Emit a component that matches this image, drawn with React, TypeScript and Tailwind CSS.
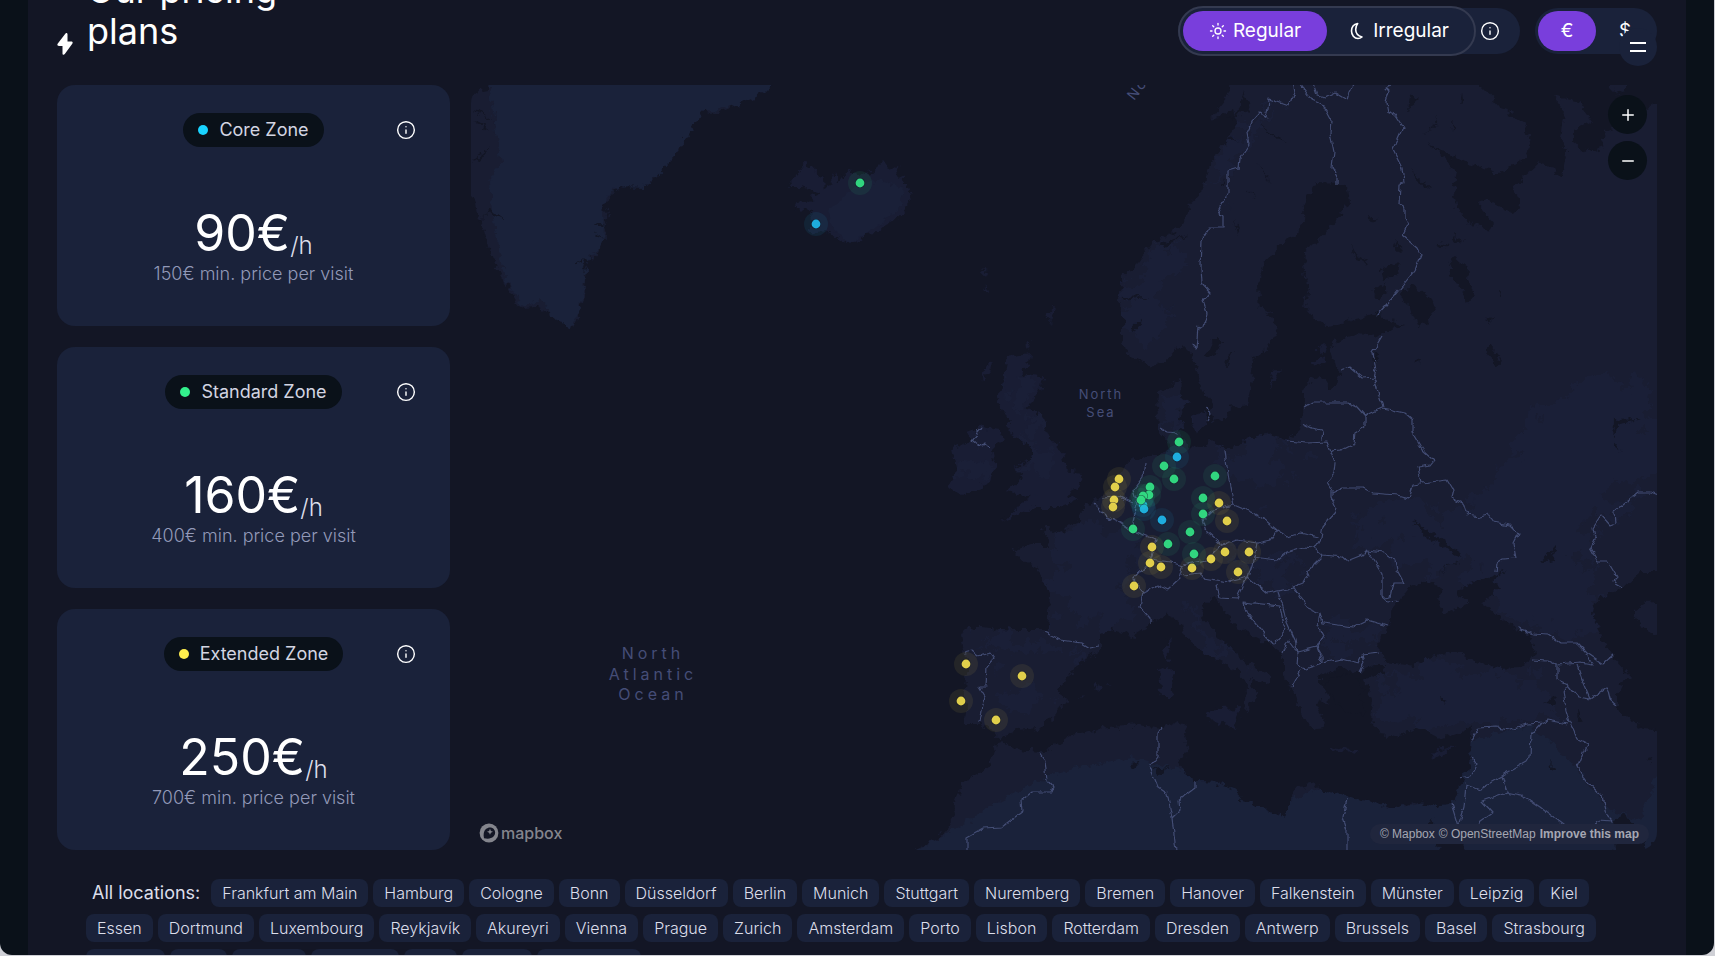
import {useState} from "react"
import clsx from "clsx"
import {Info, Minus, Plus, Sun} from "lucide-react"

interface Zone {
    name: string
    dot: string
    price: number
    minimum: number
}

const zones: Zone[] = [
    {name: "Core Zone", dot: "bg-[#19d3ff]", price: 90, minimum: 150},
    {name: "Standard Zone", dot: "bg-[#33f08c]", price: 160, minimum: 400},
    {name: "Extended Zone", dot: "bg-[#ffee4d]", price: 250, minimum: 700},
]

const locations = [
    "Frankfurt am Main", "Hamburg", "Cologne", "Bonn", "Düsseldorf", "Berlin", "Munich", "Stuttgart",
    "Nuremberg", "Bremen", "Hanover", "Falkenstein", "Münster", "Leipzig", "Kiel",
    "Essen", "Dortmund", "Luxembourg", "Reykjavík", "Akureyri", "Vienna", "Prague", "Zurich",
    "Amsterdam", "Porto", "Lisbon", "Rotterdam", "Dresden", "Antwerp", "Brussels", "Basel", "Strasbourg",
    "Geneva", "Graz", "Madrid", "Salzburg", "Linz", "Seville", "The Hague",
]

const markers: {color: string, points: number[][]}[] = [
    {color: "#f2de4e", points: [
        [1119, 479], [1115, 487], [1114, 500], [1113, 507], [1219, 503], [1227, 521], [1152, 547], [1150, 563],
        [1161, 567], [1192, 568], [1211, 559], [1225, 552], [1249, 552], [1238, 572], [1134, 586],
        [966, 664], [1022, 676], [961, 701], [996, 720],
    ]},
    {color: "#1fb9ee", points: [[816, 224], [1177, 457], [1143, 505], [1144, 509], [1162, 520]]},
    {color: "#34e587", points: [
        [860, 183], [1179, 442], [1164, 466], [1174, 479], [1215, 476], [1203, 498], [1203, 514], [1190, 532],
        [1168, 544], [1194, 554], [1133, 529], [1150, 487], [1149, 495], [1143, 496], [1141, 500],
    ]},
]

const continent = "M1233 80 1227 97 1210 120 1233 110 1237 123 1228 138 1217 153 1208 170 1203 190 1187 205 1192 210 1177 230 1153 243 1137 263 1122 277 1119 300 1123 320 1123 340 1128 355 1148 367 1167 360 1183 343 1190 350 1197 370 1203 393 1212 403 1211 422 1223 420 1230 408 1247 405 1252 380 1255 357 1267 347 1278 330 1273 317 1260 307 1258 287 1263 267 1277 247 1297 235 1303 220 1304 203 1317 182 1337 183 1348 188 1350 203 1337 220 1317 242 1305 250 1304 267 1308 287 1305 307 1313 317 1328 327 1353 320 1377 313 1388 320 1405 325 1383 332 1380 337 1360 333 1330 343 1333 355 1337 370 1340 372 1338 387 1330 388 1320 375 1310 380 1303 393 1302 420 1300 430 1287 440 1275 437 1273 433 1253 437 1230 448 1223 448 1213 440 1200 448 1190 447 1183 437 1177 430 1178 423 1180 412 1187 403 1182 397 1183 377 1167 390 1158 393 1157 410 1160 430 1165 440 1168 450 1153 455 1143 458 1127 463 1120 477 1110 490 1100 498 1083 507 1082 520 1067 527 1058 533 1048 528 1043 528 1048 545 1033 545 1012 550 1020 558 1037 567 1040 577 1050 593 1048 630 1013 630 980 627 972 627 960 635 963 650 968 667 965 687 962 700 967 707 964 724 980 724 993 732 1001 739 1015 730 1040 728 1055 715 1067 700 1060 690 1073 668 1100 650 1100 633 1112 629 1133 636 1150 625 1165 615 1180 622 1183 635 1207 655 1237 670 1247 687 1245 712 1258 695 1250 680 1272 683 1270 677 1237 655 1220 637 1202 617 1205 603 1217 597 1222 607 1233 623 1253 637 1273 647 1283 655 1283 677 1293 690 1300 707 1308 723 1317 733 1325 723 1317 707 1320 700 1330 703 1320 683 1320 675 1343 668 1360 673 1373 666 1385 666 1384 672 1363 680 1373 700 1370 717 1380 735 1397 737 1417 728 1437 738 1453 735 1472 727 1470 743 1471 760 1460 787 1452 803 1437 806 1417 802 1393 808 1373 802 1350 798 1327 792 1313 783 1297 788 1290 797 1290 810 1282 817 1263 808 1243 802 1237 790 1217 783 1197 782 1178 767 1188 747 1183 737 1189 725 1177 722 1163 728 1140 725 1113 727 1077 733 1043 752 1017 750 1003 742 997 743 988 767 963 782 953 803 955 817 940 837 920 847 905 862 1670 862 1670 78Z"

const islands = [
    // Iceland
    "M788 187 796 175 805 163 812 167 824 180 825 193 835 173 839 183 849 170 860 175 869 173 878 165 883 160 889 168 897 165 899 177 908 187 912 199 905 207 901 217 885 225 876 233 865 234 862 240 851 243 839 240 830 232 817 233 808 232 813 225 812 210 796 208 794 204 814 202 810 197 819 192 803 187Z",
    // Great Britain and Ireland
    "M1007 357 1030 353 1028 365 1020 375 1043 377 1040 390 1027 408 1042 415 1047 433 1063 453 1067 470 1083 473 1080 487 1067 493 1078 500 1060 507 1037 507 1020 513 1002 522 1020 503 1033 497 1007 492 1023 477 1013 467 1030 460 1033 447 1020 440 1008 432 1010 420 1002 412 998 397 1003 377Z",
    "M982 427 1000 430 1002 440 992 450 995 467 990 483 963 495 947 487 957 473 952 450 970 440 968 432Z",
    "M985 368 993 359 990 372 982 382ZM1027 340 1032 345 1028 350ZM1048 312 1055 306 1050 325ZM981 270 990 271 987 277ZM985 285 990 292 986 291Z",
    // Denmark's islands, Gotland, Saaremaa
    "M1190 417 1207 411 1205 426 1196 434ZM1174 421 1184 420 1183 430 1176 429ZM1272 373 1282 369 1270 388ZM1312 363 1324 356 1328 361 1313 367ZM1316 348 1325 346 1324 353Z",
    // Mediterranean
    "M1158 670 1170 665 1174 680 1172 697 1162 697ZM1162 650 1171 638 1168 661ZM1205 713 1215 709 1240 708 1235 729 1212 720ZM1330 747 1360 751 1356 754 1332 750ZM1430 754 1453 745 1442 757 1434 759ZM1092 687 1098 684 1102 688 1098 693ZM1078 698 1083 697 1080 700ZM1107 683 1112 684 1109 685Z",
]

const greenland = "M488 78 780 78 765 92 750 100 738 105 722 112 712 114 702 112 693 98 700 117 690 127 686 138 680 150 674 158 665 166 655 178 646 187 640 182 630 186 636 171 626 187 617 186 612 197 603 204 608 215 604 225 606 236 600 246 596 254 588 262 586 278 584 296 580 310 577 322 571 328 555 318 540 307 522 308 515 300 507 285 498 268 490 250 484 230 478 215 475 200 465 190 465 95 488 90Z"

const seas = [
    // White Sea
    "M1475 80 1488 93 1500 107 1523 122 1532 142 1523 160 1500 173 1470 165 1447 153 1428 142 1457 173 1453 193 1460 215 1487 233 1494 223 1477 203 1487 200 1513 213 1520 205 1513 187 1540 162 1562 175 1567 150 1560 138 1564 110 1553 96 1577 101 1592 122 1573 130 1573 140 1587 152 1602 148 1605 130 1622 126 1630 112 1647 108 1668 97 1668 78 1627 78 1627 88 1616 95 1608 78Z",
    // Black Sea and the Sea of Azov
    "M1377 645 1387 630 1392 610 1410 587 1427 580 1443 590 1437 600 1443 613 1467 605 1467 600 1455 590 1480 580 1507 570 1493 580 1498 588 1490 598 1480 602 1487 607 1513 627 1530 637 1536 655 1520 667 1497 668 1470 660 1460 652 1430 657 1413 666 1387 662Z",
    // Caspian Sea
    "M1668 572 1640 572 1623 587 1597 600 1592 613 1602 637 1613 657 1632 677 1622 682 1617 693 1617 710 1630 720 1643 729 1668 731 1668 640 1645 630 1633 613 1645 602 1668 600Z",
    // Red Sea and the Gulf
    "M1430 818 1445 840 1452 845 1458 830 1468 860 1443 860ZM1612 822 1622 816 1632 818 1637 833 1645 847 1653 845 1668 835 1668 860 1616 860Z",
    // Lakes
    "M1412 283 1432 300 1436 310 1428 322 1417 326 1408 303 1402 295ZM1455 257 1468 267 1467 280 1476 293 1468 303 1460 287 1448 267ZM1490 345 1503 362 1498 366 1485 352ZM1213 340 1223 340 1217 353 1205 358ZM1233 352 1230 360 1225 370 1226 358ZM1373 349 1379 360 1374 365ZM1485 320 1493 317 1490 323ZM1415 362 1421 359 1420 364ZM1500 290 1503 293 1501 297Z",
    "M1438 116 1432 130 1425 132 1436 127ZM1451 120 1454 128 1452 131ZM1463 93 1464 100 1461 103ZM1410 96 1420 99 1411 107 1408 112ZM1410 168 1420 179 1432 189 1420 184ZM1452 232 1462 242 1455 243ZM1440 242 1448 246 1442 248ZM1352 246 1358 258 1368 264 1356 260ZM1380 270 1400 262 1396 275 1382 280ZM1372 290 1384 284 1388 294 1377 300ZM1367 216 1377 218 1370 223ZM1393 240 1402 250 1398 252Z",
    "M1412 520 1430 532 1450 545 1461 552 1460 558 1445 546 1425 536ZM1461 563 1446 566 1441 577 1446 564ZM1614 420 1640 419 1620 424 1613 440 1622 452 1613 444ZM1540 563 1557 545 1552 560ZM1543 581 1558 590 1548 584ZM1440 698 1445 700 1442 704ZM1543 702 1556 697 1552 704ZM1577 708 1582 720 1578 723ZM1550 762 1556 768 1553 772ZM1646 760 1652 758 1653 764ZM1132 763 1138 762 1134 768ZM1152 770 1170 768 1160 774Z",
    // Aegean and Norwegian inlets
    "M1322 682 1350 672 1362 684 1360 700 1366 715 1345 712 1330 695ZM1122 298 1150 297 1124 301ZM1130 328 1144 316 1134 333ZM1160 243 1190 234 1165 246ZM1225 120 1250 110 1245 90 1240 110ZM1228 138 1240 140 1230 141ZM1220 183 1228 178 1222 186ZM1258 123 1288 144 1276 138ZM1256 162 1272 184 1264 175ZM1247 190 1257 199 1252 196ZM1234 220 1240 234 1236 230Z",
    // Greenland's fjords
    "M471 110 495 122 480 112ZM471 123 490 130 478 122ZM472 163 490 147 480 160ZM478 223 490 210 504 220 488 213ZM578 260 588 262 585 270ZM596 222 607 224 598 225ZM594 232 604 238 598 236ZM580 288 588 290 582 289Z",
]

// Grass and scrub, a shade lighter than the bare ground
const meadow = "M1120 290 1155 250 1185 240 1170 290 1150 345 1130 340ZM1215 160 1250 120 1275 100 1262 135 1230 165 1210 200ZM1002 370 1037 380 1024 408 1005 400ZM1025 420 1042 430 1060 470 1045 490 1030 470ZM1165 392 1180 385 1180 425 1165 430ZM955 460 990 455 985 480 960 490ZM1060 540 1100 520 1140 540 1130 600 1110 625 1055 620ZM1345 530 1400 500 1460 510 1530 430 1600 370 1657 405 1657 480 1600 510 1580 560 1600 590 1590 640 1540 630 1500 600 1450 570 1400 560ZM1240 560 1300 560 1290 585 1260 590ZM1330 630 1380 625 1370 650 1330 650ZM1385 670 1460 665 1530 680 1560 700 1540 720 1470 720 1430 735 1390 715ZM970 635 1040 635 1080 650 1060 660 1000 650ZM1000 680 1055 690 1030 715 990 705ZM1180 610 1220 640 1250 670 1230 660 1200 645ZM1210 450 1270 440 1300 460 1290 490 1240 480ZM1560 420 1600 400 1620 430 1590 450Z"
const iceCap = "M488 78 780 78 765 92 738 105 702 112 686 138 674 158 646 187 617 186 603 204 604 240 588 262 580 310 571 328 555 318 540 300 522 305 507 283 500 255 492 215 490 180 501 165 494 120Z"
const sands = "M895 862 963 825 1000 800 1050 775 1080 767 1130 758 1180 770 1240 790 1290 800 1340 780 1390 808 1455 800 1472 740 1530 725 1570 760 1610 810 1640 820 1670 740 1670 862Z"
const iceShades = "M830 210 850 190 880 180 905 190 898 210 870 232 850 243 832 228Z"

const borders = [
    "M1292 80 1294 92 1289 106 1269 99 1268 110 1266 117 1259 113 1253 120 1247 133 1249 145 1239 160 1238 168 1228 171 1228 193 1218 213 1223 216 1223 227 1210 227 1202 240 1201 267 1202 284 1210 293 1203 301 1207 313 1205 323 1198 328 1196 348 1192 344",
    "M1297 80 1312 100 1323 105 1331 120 1330 133 1334 152 1332 167 1337 177 1337 185",
    "M1312 80 1317 95 1325 97 1335 92 1347 99 1349 92 1356 80",
    "M1396 84 1386 88 1389 91 1386 102 1388 112 1395 115 1403 127 1393 150 1402 168 1404 183 1400 184 1399 205 1404 208 1404 218 1409 223 1403 235 1417 247 1421 255 1415 270 1395 295 1377 315",
    "M1382 337 1373 352 1376 370 1374 378 1378 393 1383 407M1340 370 1350 367 1363 378 1375 377",
    "M1303 408 1313 402 1347 402 1357 407 1365 416 1382 408 1392 410 1405 413 1413 420 1413 433 1423 450 1434 460 1430 465 1418 467 1422 483 1430 482 1447 480 1453 490 1451 498 1463 503 1467 515 1480 517 1488 515 1493 522 1510 525 1518 533 1513 543 1516 558 1503 559 1497 563 1496 572",
    "M1365 415 1365 427 1355 433 1354 443 1340 450 1330 451M1302 423 1312 428 1323 430 1322 440M1287 441 1307 443 1327 442 1335 462 1334 473 1327 482 1332 490 1332 498 1336 507 1335 513 1323 527 1321 538 1315 548 1323 555 1342 557 1347 561 1362 555 1367 550 1383 552 1395 560 1397 570 1404 583 1393 583 1390 597 1384 598",
    "M1332 493 1342 488 1363 488 1373 493 1397 495 1409 498 1413 485 1422 484M1368 551 1382 573 1382 597 1388 602 1398 601",
    "M1323 555 1313 565 1303 583 1293 587 1300 598 1308 608 1320 613 1323 623 1353 627 1367 620 1387 626M1320 613 1318 625 1323 635 1317 647 1323 657 1323 663 1342 659 1358 663 1362 655 1380 653M1362 655 1364 663 1360 671",
    "M1297 652 1317 647 1323 663 1305 669 1296 665ZM1301 670 1292 687M1283 653 1288 640 1297 652M1283 607 1286 620 1295 640 1297 652",
    "M1225 450 1227 467 1230 487 1234 505 1253 513 1265 520 1277 530 1288 537 1300 533 1318 537M1234 505 1213 510 1203 520 1207 532 1222 545 1237 540 1257 543 1270 540 1277 530M1257 543 1253 562 1248 577 1228 582 1203 578 1200 573 1183 575M1222 545 1207 560 1183 565M1253 557 1277 560 1287 552 1303 547 1315 548",
    "M1145 462 1143 477 1133 490 1137 503 1133 523 1137 532 1157 540 1150 560 1133 580 1143 592 1157 585 1167 590 1180 578 1183 567 1170 563 1150 560M1093 503 1107 517 1120 523 1130 530 1137 532M1102 498 1120 497 1133 503M1143 592 1140 607 1150 618 1150 623",
    "M1217 585 1220 597 1237 598 1243 585 1248 577 1267 593 1293 588M1243 603 1247 613 1273 645 1285 630 1280 607ZM1278 592 1283 607M1160 428 1167 432 1177 433M1207 407 1210 415 1207 421",
    "M982 428 972 440 980 447 985 442 990 447M1044 632 1060 640 1082 643 1090 648 1100 646M964 653 972 651 978 656 990 653 994 659 987 667 986 687 979 687 985 697 982 710 980 722",
    "M1040 753 1045 760 1047 780 1053 787 1051 792 1032 792 1022 800 1023 811 1002 827 983 828 967 837 967 858M1162 727 1158 733 1158 757 1150 767 1158 787 1167 793 1172 818 1177 858M1195 780 1195 788 1179 800 1180 810 1172 818M1347 799 1343 818 1347 830 1347 858",
    "M1517 629 1533 634 1548 635 1560 643 1577 643 1587 653 1603 664 1613 655M1533 659 1547 660 1557 665 1580 663 1592 665 1586 654M1557 665 1557 680 1568 685 1578 697 1590 699 1607 687 1610 700 1616 705M1577 665 1583 683 1590 699",
    "M1568 685 1563 692 1566 710 1570 723 1577 738 1587 743 1577 767 1587 782 1603 797 1607 815 1613 821M1471 742 1478 728 1497 727 1510 729 1527 724 1542 723 1548 720 1568 724M1542 723 1531 735 1530 757 1527 762 1502 776 1480 789 1466 784 1464 807 1458 826 1451 803M1502 776 1507 792 1482 801 1493 813 1480 822 1473 830 1458 829M1507 792 1522 795 1540 807 1568 828 1590 832 1598 820 1613 821M1472 758 1478 764 1470 777 1461 779",
    "M1662 497 1650 492 1638 492 1622 505 1614 512 1615 523 1610 525 1601 515 1593 527 1595 537 1590 548 1598 562 1608 562 1617 577 1613 581 1623 587",
]

function MapCanvas() {
    return <svg viewBox="471 85 1186 765" preserveAspectRatio="xMidYMid slice" role="img"
                aria-label="Map of the service locations" className="absolute inset-0 size-full">
        <defs>
            <filter id="coast" filterUnits="userSpaceOnUse" colorInterpolationFilters="sRGB"
                    x="460" y="75" width="1210" height="790">
                <feTurbulence type="fractalNoise" baseFrequency="0.14" numOctaves="3" seed="4"/>
                <feDisplacementMap in="SourceGraphic" scale="11" xChannelSelector="R" yChannelSelector="G"/>
            </filter>
            <filter id="patches" filterUnits="userSpaceOnUse" colorInterpolationFilters="sRGB"
                    x="460" y="75" width="1210" height="790">
                <feTurbulence type="fractalNoise" baseFrequency="0.04" numOctaves="4" seed="9"/>
                <feDisplacementMap in="SourceGraphic" scale="70" xChannelSelector="R" yChannelSelector="G"/>
            </filter>
            <filter id="border" filterUnits="userSpaceOnUse" colorInterpolationFilters="sRGB"
                    x="460" y="75" width="1210" height="790">
                <feTurbulence type="fractalNoise" baseFrequency="0.12" numOctaves="2" seed="2"/>
                <feDisplacementMap in="SourceGraphic" scale="6" xChannelSelector="R" yChannelSelector="G"/>
            </filter>
            <clipPath id="land">
                <path d={continent}/>
                {islands.map(d => <path key={d} d={d}/>)}
            </clipPath>
        </defs>
        <g filter="url(#coast)">
            <path d={greenland} fill="#191d32"/>
            <path d={iceCap} fill="#1a223a"/>
            <path d={continent} fill="#191d32"/>
            {islands.map(d => <path key={d} d={d} fill="#191d34"/>)}
            <g clipPath="url(#land)">
                <path d={iceShades} fill="#1a2038"/>
                <path d={meadow} fill="#1a1f37" filter="url(#patches)"/>
                <path d={sands} fill="#1a223a"/>
            </g>
            {seas.map(d => <path key={d} d={d} fill="#131625"/>)}
        </g>
        <g fill="none" stroke="#434d74" strokeWidth="1.2" strokeLinejoin="round" filter="url(#border)">
            {borders.map(d => <path key={d} d={d}/>)}
        </g>
        <g fill="#454d77" textAnchor="middle" className="font-[Inter,sans-serif]">
            <text fontSize="16" letterSpacing="4">
                <tspan x="653" y="659">North</tspan>
                <tspan x="653" y="680">Atlantic</tspan>
                <tspan x="653" y="700">Ocean</tspan>
            </text>
            <text fontSize="13" letterSpacing="2">
                <tspan x="1101" y="399">North</tspan>
                <tspan x="1101" y="417">Sea</tspan>
            </text>
            <text fontSize="14" letterSpacing="2" textAnchor="start" transform="translate(1134 101) rotate(-52)">Norwegian</text>
        </g>
        {markers.map(({color, points}) => <g key={color} fill={color}>
            {points.map(([x, y]) => <g key={`${x}-${y}`}>
                <circle cx={x} cy={y} r="12" opacity="0.08"/>
                <circle cx={x} cy={y} r="5" fill="#131625" opacity="0.6"/>
                <circle cx={x} cy={y} r="4.4" opacity="0.92"/>
            </g>)}
        </g>)}
    </svg>
}

function MapboxLogo() {
    return <a href="#mapbox" aria-label="Mapbox" className="absolute bottom-[7px] left-2 flex items-center gap-0.5 text-[#84858d]">
        <svg viewBox="0 0 20 20" className="size-5">
            <circle cx="10" cy="10" r="9.4" fill="currentColor"/>
            <path d="M5 15.2C4.2 11.5 4.6 8.3 6.9 6.1c2.4-2.3 6-2.1 7.8-.2 2 2 2 5.500-.2 7.700C12.200 15.800 8.700 16 5 15.200Z" fill="#131625"/>
            <path d="m11 5.800.9 2.100 2.100.9-2.100.9-.9 2.100-.9-2.100L8 8.800l2.100-.9Z" fill="currentColor"/>
        </svg>
        <span className="text-base leading-5 font-medium">mapbox</span>
    </a>
}

function ZoneCard({zone, currency}: {zone: Zone, currency: string}) {
    return <article className="flex min-h-[241px] flex-1 flex-col rounded-[18px] bg-[#1a223a] px-[34px] pt-7">
        <div className="grid grid-cols-[1fr_auto_1fr] items-center">
            <h2 className="col-start-2 flex h-[34px] items-center gap-[11px] rounded-full bg-[#0a1119] px-[15px] text-lg font-normal text-[#d3d5e2]">
                <span className={clsx("size-[10px] rounded-full", zone.dot)}/>
                {zone.name}
            </h2>
            <button type="button" aria-label={`About ${zone.name}`} className="justify-self-end text-white">
                <Info size={20} strokeWidth={1.7}/>
            </button>
        </div>
        <div className="mt-[59px] flex items-baseline justify-center text-white">
            <span className="text-[50px] leading-[54px]">{zone.price}{currency}</span>
            <sub className="bottom-[-3px] text-2xl leading-none font-light text-[#dcdeea]">/h</sub>
        </div>
        <p className="mt-0.5 text-center text-lg leading-6 font-light text-[#9299b8]">
            {zone.minimum}{currency} min. price per visit
        </p>
    </article>
}

export default function App() {
    const [hours, setHours] = useState("regular")
    const [currency, setCurrency] = useState("€")

    return <div className="h-screen overflow-hidden bg-[#cfd0d6] pr-px pb-px font-[Inter,sans-serif]">
        <div className="h-full overflow-hidden rounded-b-xl bg-[#0a1119] px-7">
            <main className="min-h-full bg-[#131625] px-[29px]">
                <div className="flow-root">
                    <header className="-mt-[34px] flex h-[90px] items-end justify-between">
                        <div className="flex h-full items-start gap-3.5">
                            <svg viewBox="0 0 16 22" className="mt-[67px] h-[22px] w-4 fill-white">
                                <path d="M8.300.700 1 10.200c-1.200 1.500-.7 2.700 1 2.700h3.500v7.600c0 1.600 1.300 1.700 2.300.5l7.300-10c1.100-1.500.6-2.600-1-2.600h-3.600V1.300c0-1.500-1.200-1.800-2.200-.6Z"/>
                            </svg>
                            <h1 className="w-[200px] pt-1 text-4xl leading-[41px] font-normal text-white">Our pricing plans</h1>
                        </div>
                        <div className="relative flex h-[50px] items-center gap-[15px] text-white">
                            <div className="flex h-[46px] items-center rounded-full bg-[#1a223a] pr-5">
                                <div className="flex h-[50px] items-center rounded-full border-2 border-[#343a50] bg-[#1a223a] px-[3px] text-[19px]">
                                    <button type="button" aria-pressed={hours === "regular"} onClick={() => setHours("regular")}
                                            className={clsx("flex h-10 items-center gap-1.5 rounded-full px-[26px]",
                                                hours === "regular" && "bg-[#793edc]")}>
                                        <Sun size={18} strokeWidth={1.8}/>
                                        Regular
                                    </button>
                                    <button type="button" aria-pressed={hours === "irregular"} onClick={() => setHours("irregular")}
                                            className={clsx("flex h-10 items-center gap-2 rounded-full px-[22px]",
                                                hours === "irregular" && "bg-[#793edc]")}>
                                        <svg viewBox="0 0 16 18" className="h-[18px] w-4 fill-none stroke-current stroke-[1.6]">
                                            <path d="M8.700 1.500C4.600 2.300 2.500 5.300 2.500 9s2.700 7.500 6.500 7.500c1.500 0 2.800-.5 4-1.500C8.600 13.800 6.700 11 6.700 7.500c0-2.300.6-4.300 2-6Z" strokeLinejoin="round"/>
                                        </svg>
                                        Irregular
                                    </button>
                                </div>
                                <button type="button" aria-label="About the hours" className="ml-1">
                                    <Info size={20} strokeWidth={1.7}/>
                                </button>
                            </div>
                            <div className="flex h-[46px] w-[122px] items-center rounded-full bg-[#1a223a] px-[3px] text-[19px]">
                                <button type="button" aria-pressed={currency === "€"} onClick={() => setCurrency("€")}
                                        className={clsx("h-10 flex-1 rounded-full", currency === "€" && "bg-[#793edc]")}>€</button>
                                <button type="button" aria-pressed={currency === "$"} onClick={() => setCurrency("$")}
                                        className={clsx("h-10 flex-1 rounded-full", currency === "$" && "bg-[#793edc]")}>$</button>
                            </div>
                            <button type="button" aria-label="Menu"
                                    className="absolute right-0 -bottom-2.5 flex size-[38px] flex-col items-center justify-center gap-1.5 rounded-full bg-[#1a223a]">
                                <span className="h-0.5 w-4 bg-white"/>
                                <span className="h-0.5 w-4 bg-white"/>
                            </button>
                        </div>
                    </header>
                </div>

                <section className="mt-[29px] flex gap-[21px]">
                    <div className="flex w-[393px] shrink-0 flex-col gap-[21px]">
                        {zones.map(zone => <ZoneCard key={zone.name} zone={zone} currency={currency}/>)}
                    </div>
                    <div className="relative flex-1 overflow-hidden rounded-[18px]">
                        <MapCanvas/>
                        <div className="absolute top-2.5 right-2.5 flex flex-col gap-[7px] text-white">
                            <button type="button" aria-label="Zoom in"
                                    className="flex size-[39px] items-center justify-center rounded-full bg-[#0a1119]">
                                <Plus size={18} strokeWidth={2}/>
                            </button>
                            <button type="button" aria-label="Zoom out"
                                    className="flex size-[39px] items-center justify-center rounded-full bg-[#0a1119]">
                                <Minus size={18} strokeWidth={2}/>
                            </button>
                        </div>
                        <MapboxLogo/>
                        <div className="absolute right-2 bottom-1.5 flex h-5 items-center gap-1 rounded-full bg-[#20263d] px-2.5 font-['Liberation_Sans',sans-serif] text-xs text-[#a5a7b3]">
                            <a href="#mapbox">© Mapbox</a>
                            <a href="#osm">© OpenStreetMap</a>
                            <a href="#improve" className="font-bold">Improve this map</a>
                        </div>
                    </div>
                </section>

                <section className="mt-[29px] flex flex-wrap gap-x-[5px] gap-y-[7px] px-[29px] font-light text-[#dcdeea]">
                    <h2 className="mr-1.5 pl-1.5 text-lg leading-7 font-normal">All locations:</h2>
                    {locations.map(location => <span key={location}
                        className="rounded-lg bg-[#1a223a] px-[11px] text-base leading-7">{location}</span>)}
                </section>
            </main>
        </div>
    </div>
}
